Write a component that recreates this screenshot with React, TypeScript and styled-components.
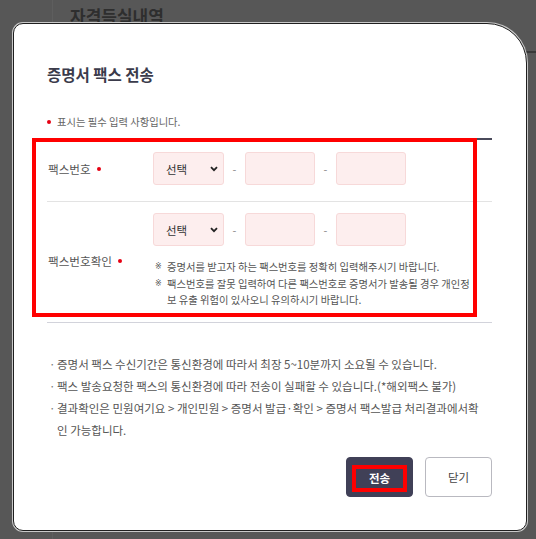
import styled, { createGlobalStyle } from "styled-components";

const GlobalStyle = createGlobalStyle`
	html, body {
		margin: 0;
		padding: 0;
		background: #575757;
	}
	body {
		font-family: "Noto Sans CJK KR", "Noto Sans", sans-serif;
	}
	* {
		box-sizing: border-box;
	}
`;

const Backdrop = styled.div`
	position: relative;
	width: 100%;
	height: 539px;
	background: #575757;
	overflow: hidden;
`;

const BackPage = styled.div`
	margin-left: 52px;
	height: 539px;
	border-left: 1px solid #5e5e5e;
	padding: 3px 0 0 17px;

	&::after {
		content: "";
		position: absolute;
		right: 0;
		top: 51px;
		width: 20px;
		height: 2px;
		background: #383838;
	}
`;

const BackTitle = styled.h2`
	margin: 0;
	font-size: 17px;
	line-height: 26px;
	font-weight: 700;
	color: #2e2e2e;
`;

const Modal = styled.section`
	position: absolute;
	left: 13px;
	top: 23px;
	width: 514px;
	height: 508px;
	background: #fff;
	border: 1px solid #1f1f1f;
	border-radius: 10px 40px 10px 10px;
	box-shadow: 0 0 0 1px #c9c9c9;
	padding: 39px 34px 0 33px;
`;

const Title = styled.h1`
	margin: 0;
	font-size: 15.5px;
	line-height: 22px;
	font-weight: 700;
	color: #3b3b4b;
`;

const RequiredNote = styled.p`
	margin: 29px 0 0;
	display: flex;
	align-items: center;
	font-size: 10.3px;
	line-height: 16px;
	color: #666;
`;

const Dot = styled.span<{ $gap?: number }>`
	display: inline-block;
	width: 4px;
	height: 4px;
	border-radius: 50%;
	background: #e60012;
	margin-left: ${(p) => p.$gap ?? 0}px;
	margin-right: ${(p) => (p.$gap ? 0 : 6)}px;
`;

const Table = styled.div`
	margin-top: 8px;
	border-top: 2px solid #4a4a5a;
`;

const Row = styled.div<{ $top: number; $bottom: number; $line: string }>`
	display: grid;
	grid-template-columns: 106px 1fr;
	padding: ${(p) => p.$top}px 0 ${(p) => p.$bottom}px;
	border-bottom: 1px solid ${(p) => p.$line};
`;

const Label = styled.div`
	align-self: center;
	display: flex;
	align-items: center;
	padding-left: 1px;
	font-size: 11.6px;
	color: #555;
`;

const Fields = styled.div`
	display: flex;
	align-items: center;
`;

const SelectBox = styled.div`
	width: 71px;
	height: 33px;
	display: flex;
	align-items: center;
	justify-content: space-between;
	padding: 0 5px 0 12px;
	background: #fdeeee;
	border: 1px solid #f7d9d9;
	border-radius: 3px;
	font-size: 11.5px;
	color: #333;
`;

const Dash = styled.span`
	width: 21px;
	text-align: center;
	font-size: 11px;
	color: #888;
`;

const NumInput = styled.input`
	width: 70px;
	height: 33px;
	background: #fdeeee;
	border: 1px solid #f7d9d9;
	border-radius: 3px;
	outline: none;
	padding: 0 8px;
	font-size: 11px;
`;

const Notes = styled.ul`
	list-style: none;
	margin: 13px 0 0;
	padding: 0 0 0 2px;
`;

const NoteItem = styled.li`
	display: flex;
	font-size: 10.3px;
	line-height: 16.5px;
	color: #555;
`;

const NoteMark = styled.span`
	flex: 0 0 12px;
	font-family: "DejaVu Sans", sans-serif;
	font-size: 8px;
	color: #555;
`;

const NoteText = styled.span`
	max-width: 308px;
`;

const InfoList = styled.ul`
	list-style: none;
	margin: 30px 0 0;
	padding: 0;
`;

const InfoItem = styled.li`
	display: flex;
	font-size: 11.5px;
	line-height: 22px;
	color: #555;
`;

const Bullet = styled.span`
	flex: 0 0 10px;
	padding-left: 2px;
	color: #777;
`;

const InfoText = styled.span`
	max-width: 423px;
`;

const Actions = styled.div`
	margin-top: 16px;
	display: flex;
	justify-content: flex-end;
	gap: 12px;
`;

const Button = styled.button<{ $primary?: boolean }>`
	width: 67px;
	height: 40px;
	display: flex;
	align-items: center;
	justify-content: center;
	padding: 0;
	border-radius: 4px;
	font-family: inherit;
	font-size: 11.5px;
	font-weight: ${(p) => (p.$primary ? 700 : 400)};
	color: ${(p) => (p.$primary ? "#fff" : "#444")};
	background: ${(p) => (p.$primary ? "#404057" : "#fff")};
	border: 1px solid ${(p) => (p.$primary ? "#404057" : "#b9b9c0")};
`;

const Marked = styled.span`
	width: 55px;
	height: 27px;
	margin-top: 3px;
	display: flex;
	align-items: center;
	justify-content: center;
	border: 4px solid #ff0000;
`;

const Highlight = styled.div`
	position: absolute;
	left: 18px;
	top: 114px;
	width: 445px;
	height: 179px;
	border: 4px solid #ff0000;
	pointer-events: none;
`;

const Chevron = () => (
	<svg width="8" height="6" viewBox="0 0 8 6">
		<polyline
			points="1,1.2 4,4.2 7,1.2"
			fill="none"
			stroke="#222"
			strokeWidth="1.8"
		/>
	</svg>
);

function PhoneFields() {
	return (
		<Fields>
			<SelectBox>
				선택
				<Chevron />
			</SelectBox>
			<Dash>-</Dash>
			<NumInput />
			<Dash>-</Dash>
			<NumInput />
		</Fields>
	);
}

export default function App() {
	const notes = [
		"증명서를 받고자 하는 팩스번호를 정확히 입력해주시기 바랍니다.",
		"팩스번호를 잘못 입력하여 다른 팩스번호로 증명서가 발송될 경우 개인정보 유출 위험이 있사오니 유의하시기 바랍니다.",
	];
	const info = [
		"증명서 팩스 수신기간은 통신환경에 따라서 최장 5~10분까지 소요될 수 있습니다.",
		"팩스 발송요청한 팩스의 통신환경에 따라 전송이 실패할 수 있습니다.(*해외팩스 불가)",
		"결과확인은 민원여기요 > 개인민원 > 증명서 발급·확인 > 증명서 팩스발급 처리결과에서확인 가능합니다.",
	];

	return (
		<>
			<GlobalStyle />
			<Backdrop>
				<BackPage>
					<BackTitle>자격득실내역</BackTitle>
				</BackPage>
				<Modal>
					<Title>증명서 팩스 전송</Title>
					<RequiredNote>
						<Dot />
						표시는 필수 입력 사항입니다.
					</RequiredNote>
					<Table>
						<Row $top={12} $bottom={16} $line="#e3e3e3">
							<Label>
								팩스번호
								<Dot $gap={6} />
							</Label>
							<PhoneFields />
						</Row>
						<Row $top={11} $bottom={13} $line="#d2d3db">
							<Label>
								팩스번호확인
								<Dot $gap={6} />
							</Label>
							<div>
								<PhoneFields />
								<Notes>
									{notes.map((n) => (
										<NoteItem key={n}>
											<NoteMark>※</NoteMark>
											<NoteText>{n}</NoteText>
										</NoteItem>
									))}
								</Notes>
							</div>
						</Row>
					</Table>
					<InfoList>
						{info.map((t) => (
							<InfoItem key={t}>
								<Bullet>·</Bullet>
								<InfoText>{t}</InfoText>
							</InfoItem>
						))}
					</InfoList>
					<Actions>
						<Button $primary>
							<Marked>전송</Marked>
						</Button>
						<Button>닫기</Button>
					</Actions>
					<Highlight />
				</Modal>
			</Backdrop>
		</>
	);
}
